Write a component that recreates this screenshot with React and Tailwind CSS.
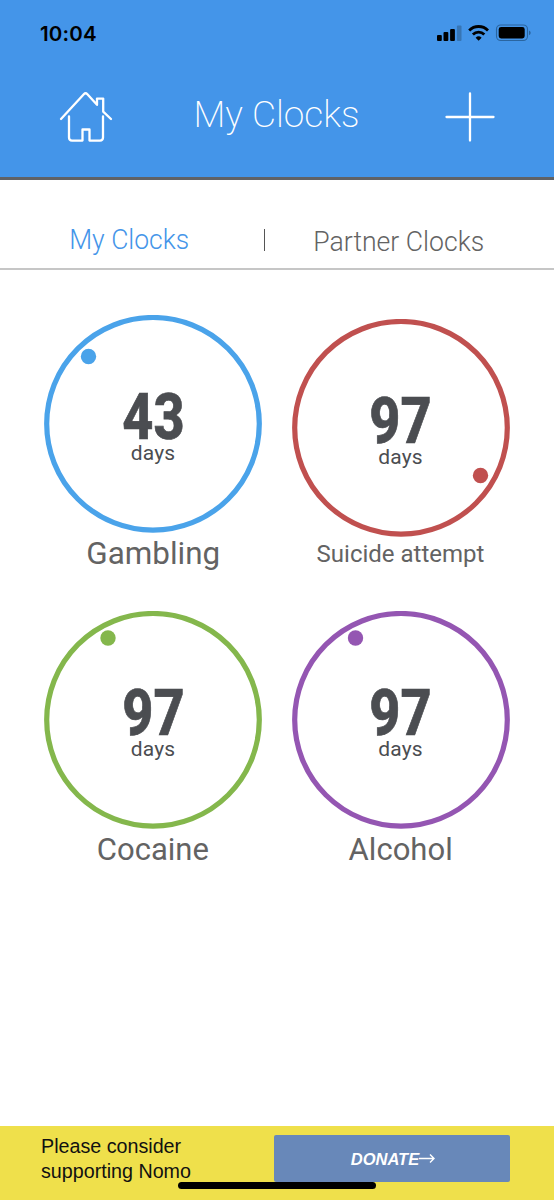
const clocks = [
  { label: 'Gambling', days: 43, color: '#4aa3ea', dx: 44.5, dy: 41.5, top: 'mt-0', size: 'text-[32px] leading-[41px] scale-x-[0.98]' },
  { label: 'Suicide attempt', days: 97, color: '#c0504f', dx: 188.5, dy: 156.5, top: 'mt-1', size: 'text-[24px] leading-[35px]' },
  { label: 'Cocaine', days: 97, color: '#84b74c', dx: 64, dy: 27, top: 'mt-0', size: 'text-[32px] leading-[41px] scale-x-[0.97]' },
  { label: 'Alcohol', days: 97, color: '#9456b2', dx: 63.5, dy: 27, top: 'mt-0', size: 'text-[32px] leading-[41px] scale-x-[0.97]' },
];

function Clock({ label, days, color, dx, dy, top, size }) {
  return (
    <div className={`flex h-[292px] w-[218px] flex-col items-center ${top}`}>
      <div className="relative flex h-[218px] w-[218px] shrink-0 flex-col items-center">
        <svg className="absolute inset-0" width="218" height="218" viewBox="0 0 218 218" fill="none">
          <circle cx="109" cy="108.8" r="106.3" stroke={color} strokeWidth="5.2" />
          <circle cx={dx} cy={dy} r="7.7" fill={color} />
        </svg>
        <div className="mt-[78px] h-[48px] scale-x-[0.83] text-[65px] leading-[48px] font-extrabold text-[#4b4d51] [-webkit-text-stroke:0.7px_#4b4d51]">{days}</div>
        <div className="h-6 text-[21px] leading-6 tracking-[0.2px] text-[#4b4d51]">days</div>
      </div>
      <div className={`h-10 whitespace-nowrap text-[#636363] ${size}`}>{label}</div>
    </div>
  );
}

function StatusIcons() {
  return (
    <svg width="94" height="18" viewBox="0 0 94 18">
      <rect x="0" y="11" width="4.8" height="6" rx="1" />
      <rect x="6.5" y="8" width="4.8" height="9" rx="1" />
      <rect x="13.1" y="5" width="4.8" height="12" rx="1" />
      <rect x="19.9" y="1.5" width="4.6" height="15.5" rx="1" fill="#3775b4" />
      <g fill="none" stroke="#000" strokeWidth="2.8">
        <path d="M32.2 6.4a13.3 13.3 0 0 1 18.8 0" />
        <path d="M35.9 10.4a8.1 8.1 0 0 1 11.4 0" />
      </g>
      <path d="M41.6 16.8l-3-3.1a4.3 4.3 0 0 1 6 0z" />
      <rect x="59.5" y="1" width="31" height="15.5" rx="4.3" fill="none" stroke="#2a65a0" strokeWidth="1.1" />
      <rect x="61.7" y="3" width="26" height="11.5" rx="2.4" />
      <path d="M92 6.4c2.2.7 2.2 4 0 4.7z" fill="#2a65a0" />
    </svg>
  );
}

export default function App() {
  return (
    <div className="flex h-[1200px] w-[554px] flex-col overflow-hidden bg-white font-['Roboto',sans-serif]">
      <header className="h-[180px] border-b-[3px] border-[#606266] bg-[#4495e9]">
        <div className="flex h-[66px] items-start justify-between pt-6 pr-[23px] pl-10 font-['Inter',sans-serif]">
          <span className="text-[20.5px] leading-[20px] font-semibold tracking-[0.2px] text-black">10:04</span>
          <StatusIcons />
        </div>
        <div className="flex items-start justify-between pr-[59px] pl-[59px] pt-6">
          <svg width="54" height="54" viewBox="0 0 54 54" fill="none" stroke="#fff" strokeWidth="2.3" strokeLinecap="round" strokeLinejoin="round">
            <path d="M2 29L24.8 4.2q1.8-1.8 3.6 0L38 14.8V8.6h6.2v13L52 29" />
            <path d="M10 26.4v21.2q0 3 3 3H23.5V39.5h7V50.6H41q3 0 3-3V26.4" />
          </svg>
          <h1 className="mr-[5px] text-[37px] leading-[50px] font-extralight whitespace-nowrap text-white">My Clocks</h1>
          <svg className="mt-[2px]" width="50" height="50" viewBox="0 0 50 50" stroke="#fff" strokeWidth="2.3" strokeLinecap="round">
            <path d="M25 1.5v47M1.5 25h47" />
          </svg>
        </div>
      </header>
      <nav className="flex h-[90px] border-b-2 border-[#c6c6c6] text-[27px] font-light whitespace-nowrap">
        <div className="flex w-[258px] justify-center pt-11 leading-8 text-[#4495e9]">
          <span className="scale-x-[0.98]">My Clocks</span>
        </div>
        <div className="w-3 pt-[49px]"><div className="ml-[6px] h-[22px] w-px bg-[#555555]" /></div>
        <div className="flex w-[258px] justify-center pt-[46px] leading-8 text-[#636363]">
          <span className="scale-x-[0.985]">Partner Clocks</span>
        </div>
      </nav>
      <main className="grid flex-1 grid-cols-[218px_218px] content-start gap-x-[29.5px] pt-[44.5px] pl-11">
        {clocks.map((clock) => <Clock key={clock.label} {...clock} />)}
      </main>
      <footer className="relative flex h-[74px] justify-between bg-[#efe04b] pr-[44px] pl-[41px] font-['Liberation_Sans',sans-serif]">
        <p className="pt-2 text-[19.7px] leading-[25px] text-[#111]">Please consider<br />supporting Nomo</p>
        <button className="mt-[9px] flex h-[47px] w-[236px] items-center justify-center rounded-[2px] bg-[#6888b9] pt-px pl-[2px] text-[16.5px] font-bold text-white italic">
          DONATE
          <svg width="16" height="12" viewBox="0 0 16 12" fill="none" stroke="#fff" strokeWidth="1.4"><path d="M0 5.5h14.5M11 1.5l4 4-4 4" /></svg>
        </button>
        <div className="absolute bottom-[11px] left-[178px] h-[7px] w-[198px] rounded-full bg-black" />
      </footer>
    </div>
  );
}
